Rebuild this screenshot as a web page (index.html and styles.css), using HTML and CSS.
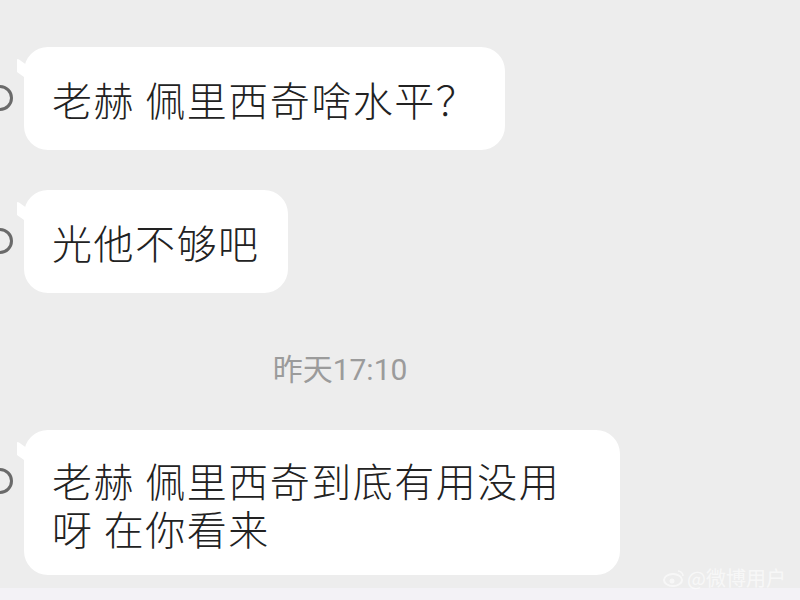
FILE: index.html
```html
<!DOCTYPE html>
<html lang="zh-CN">
<head>
    <meta charset="UTF-8">
    <meta name="viewport" content="width=device-width, initial-scale=1.0">
    <title>聊天记录</title>
    <link rel="stylesheet" href="styles.css">
</head>
<body>

    <main class="chat">
        <!-- first messages -->
        <div class="msg">
            <span class="avatar"></span>
            <div class="bubble">老赫 佩里西奇啥水平？</div>
        </div>
        <div class="msg">
            <span class="avatar"></span>
            <div class="bubble">光他不够吧</div>
        </div>

        <p class="time">昨天17:10</p>

        <div class="msg">
            <span class="avatar"></span>
            <div class="bubble wide">
                <span class="line">老赫 佩里西奇到底有用没用</span>
                <span class="line">呀 在你看来</span>
            </div>
        </div>
    </main>

    <footer class="bar"></footer>

    <div class="mark">
        <svg width="22" height="18" viewBox="0 0 22 18">
            <ellipse cx="10" cy="11" rx="9" ry="6" fill="none" stroke="#fff" stroke-width="2"/>
            <circle cx="9" cy="12" r="2.5" fill="#fff"/>
            <path d="M15 2 a5 5 0 0 1 5 5" fill="none" stroke="#fff" stroke-width="1.6"/>
        </svg>
        <span>@微博用户</span>
    </div>

</body>
</html>
```

FILE: styles.css
```css
/* Base */
body {
    margin: 0;
    height: 600px;
    overflow: hidden;
    background-color: #ededed;
    font-family: "Noto Sans CJK SC", "Noto Sans", sans-serif;
    color: #222;
    display: flex;
    flex-direction: column;
}

.chat {
    flex: 1;
    padding-top: 47px;
    display: flex;
    flex-direction: column;
    gap: 40px;
}

/* Message rows */
.msg {
    display: flex;
    align-items: flex-start;
}

.avatar {
    flex: none;
    width: 26px;
    height: 26px;
    margin: 38px 11px 0 -13px;
    border: 3px solid #6a6a6a;
    border-radius: 50%;
    box-sizing: border-box;
}

.bubble {
    position: relative;
    padding: 28px 28px 27px 28px;
    background-color: #fff;
    border-radius: 24px;
    font-size: 40px;
    font-weight: 300;
    line-height: 48px;
    letter-spacing: 1.5px;
}

.bubble::before {
    content: "";
    position: absolute;
    left: -7px;
    top: 16px;
    width: 14px;
    height: 14px;
    background-color: #fff;
    border-radius: 2px 0 0 0;
    transform: skewY(35deg);
}

.wide {
    display: flex;
    flex-direction: column;
    padding-right: 60px;
    padding-top: 26px;
    padding-bottom: 23px;
}

.line {
    display: block;
    height: 48px;
    overflow: visible;
}

/* Timestamp */
.time {
    margin: 17px 0 0 0;
    text-align: center;
    font-family: "Roboto", "Noto Sans CJK SC", sans-serif;
    font-size: 30px;
    line-height: 40px;
    color: #9b9b9b;
    padding-right: 120px;
}

/* Bottom input bar edge */
.bar {
    flex: none;
    height: 12px;
    background-color: #f3f2f6;
}

/* Watermark */
.mark {
    position: absolute;
    right: 14px;
    bottom: 8px;
    display: flex;
    align-items: center;
    gap: 2px;
    font-size: 20px;
    color: #fff;
    opacity: 0.6;
}
```
